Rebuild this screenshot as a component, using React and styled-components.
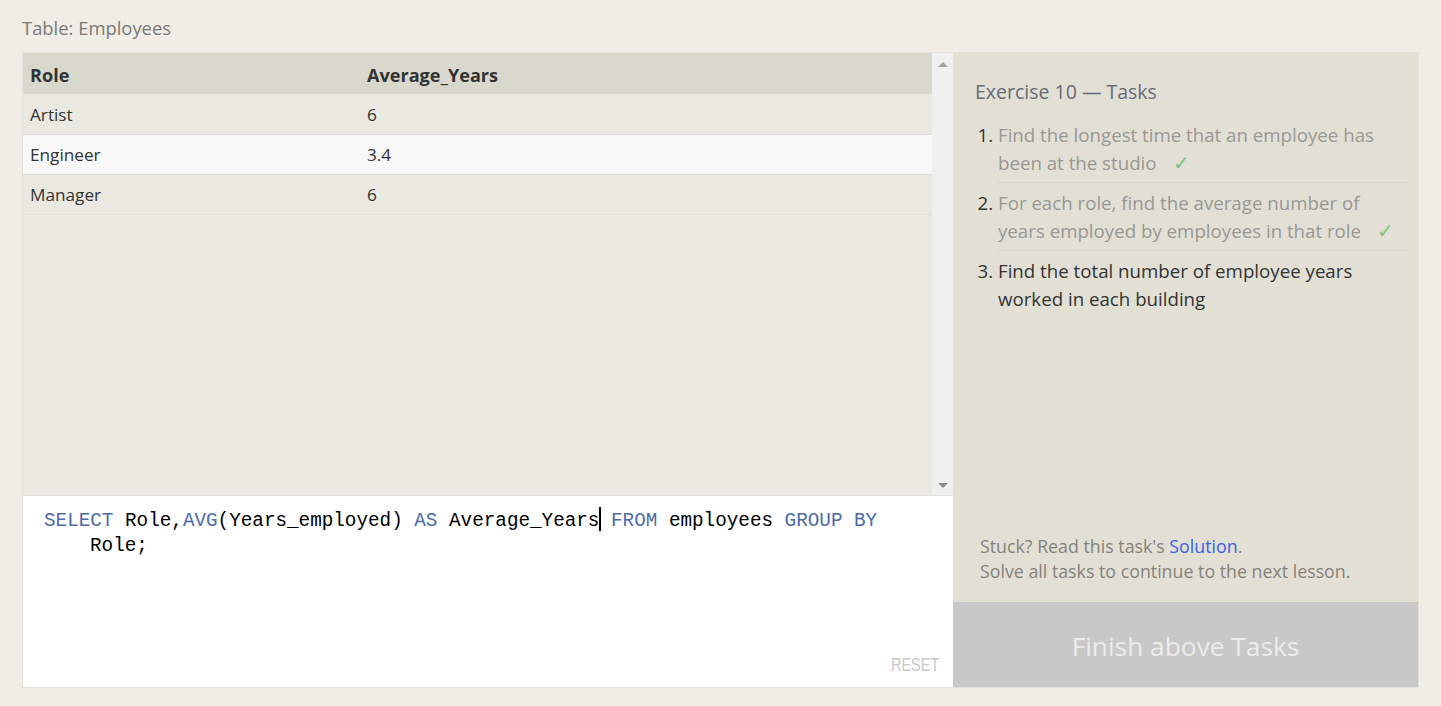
import React from "react";
import styled, { createGlobalStyle } from "styled-components";

const Global = createGlobalStyle`
  html, body { margin: 0; padding: 0; background: #efede6; }
  body { font-family: "Open Sans", "Noto Sans", sans-serif; }
  * { box-sizing: border-box; }
`;

const Page = styled.div`
  padding: 16px 22px 0 22px;
  width: 1441px;
  height: 706px;
`;

const Caption = styled.div`
  font-size: 18.4px;
  color: #7a7a76;
  line-height: 24px;
  height: 36px;
`;

const Panel = styled.div`
  display: flex;
  width: 1397px;
  height: 636px;
  border: 1px solid #e3e2da;
`;

const LeftCol = styled.div`
  width: 930px;
  display: flex;
  flex-direction: column;
`;

const TableArea = styled.div`
  height: 442px;
  display: flex;
  background: #eae9e1;
`;

const Table = styled.div`
  flex: 1;
  display: flex;
  flex-direction: column;
`;

const Row = styled.div`
  display: grid;
  grid-template-columns: 337px 1fr;
  height: ${(p) => (p.$head ? 42 : 40)}px;
  align-items: center;
  padding-top: ${(p) => (p.$head ? 2 : 0)}px;
  background: ${(p) => (p.$head ? "#d9d8cc" : p.$alt ? "#f8f8f8" : "#eae9e1")};
  border-bottom: ${(p) => (p.$head ? "1px solid #eae9e1" : "1px solid #dededa")};
  font-size: ${(p) => (p.$head ? 18.1 : 17.2)}px;
  font-weight: ${(p) => (p.$head ? 700 : 400)};
  color: #333;
`;

const Cell = styled.div`
  padding-left: 7px;
`;

const Scrollbar = styled.div`
  width: 21px;
  background: #f0f0f0;
  display: flex;
  flex-direction: column;
  justify-content: space-between;
  align-items: center;
  padding: 9px 0 7px;
`;

const Arrow = styled.div`
  width: 0;
  height: 0;
  border-left: 5px solid transparent;
  border-right: 5px solid transparent;
  ${(p) => (p.$down ? "border-top: 5px solid #8a8a8a;" : "border-bottom: 5px solid #a0a0a0;")}
`;

const Editor = styled.div`
  flex: 1;
  background: #fff;
  border-top: 1px solid #e2e2e2;
  position: relative;
  padding: 11px 21px;
  font-family: "Liberation Mono", "DejaVu Sans Mono", monospace;
  font-size: 19.3px;
  line-height: 25px;
  color: #000;
`;

const CodeLine = styled.div`
  white-space: pre;
  padding-left: ${(p) => (p.$indent ? 46 : 0)}px;
`;

const Kw = styled.span`
  color: #4c6ba8;
`;

const Caret = styled.span`
  display: inline-block;
  width: 2px;
  height: 24px;
  background: #000;
  vertical-align: -5px;
  margin-right: -2px;
`;

const Reset = styled.div`
  position: absolute;
  right: 14px;
  bottom: 9px;
  font-family: "Liberation Sans", "Arial", sans-serif;
  font-size: 17.5px;
  color: #c8c8c8;
  transform: scaleX(0.83);
  transform-origin: right;
`;

const RightCol = styled.div`
  flex: 1;
  display: flex;
  flex-direction: column;
  background: #e2e0d5;
`;

const Tasks = styled.div`
  flex: 1;
  padding: 26px 10px 0 22px;
  display: flex;
  flex-direction: column;
`;

const Title = styled.div`
  font-size: 19.5px;
  color: #676b77;
  line-height: 26px;
  margin-bottom: 16px;
`;

const TaskList = styled.ol`
  margin: 0;
  padding: 0 0 0 23px;
  font-size: 18.7px;
  line-height: 28px;
`;

const Task = styled.li`
  color: ${(p) => (p.$done ? "#999894" : "#333")};
  padding-bottom: 5px;
  margin-bottom: 6px;
  border-bottom: ${(p) => (p.$last ? "none" : "1px solid #d6d4c9")};
  &::marker {
    color: #333;
  }
`;

const Check = styled.span`
  color: #7ec77e;
  margin-left: 16px;
  font-size: 20px;
  font-family: "DejaVu Sans", sans-serif;
  font-weight: 300;
`;

const Help = styled.div`
  margin-top: auto;
  padding: 0 0 18px 5px;
  font-size: 17.8px;
  line-height: 25px;
  color: #86827a;
`;

const Link = styled.a`
  color: #3d5fe0;
  text-decoration: none;
`;

const FinishButton = styled.div`
  height: 85px;
  background: #c8c8c8;
  color: #ececec;
  font-size: 26.3px;
  display: flex;
  align-items: center;
  justify-content: center;
  padding-top: 2px;
`;

const rows = [
  ["Artist", "6"],
  ["Engineer", "3.4"],
  ["Manager", "6"],
];

export default function App() {
  return (
    <Page>
      <Global />
      <Caption>Table: Employees</Caption>
      <Panel>
        <LeftCol>
          <TableArea>
            <Table>
              <Row $head>
                <Cell>Role</Cell>
                <Cell>Average_Years</Cell>
              </Row>
              {rows.map((r, i) => (
                <Row key={r[0]} $alt={i % 2 === 1}>
                  <Cell>{r[0]}</Cell>
                  <Cell>{r[1]}</Cell>
                </Row>
              ))}
            </Table>
            <Scrollbar>
              <Arrow />
              <Arrow $down />
            </Scrollbar>
          </TableArea>
          <Editor>
            <CodeLine>
              <Kw>SELECT</Kw> Role,<Kw>AVG</Kw>(Years_employed) <Kw>AS</Kw> Average_Years<Caret /> <Kw>FROM</Kw> employees <Kw>GROUP</Kw> <Kw>BY</Kw>
            </CodeLine>
            <CodeLine $indent>Role;</CodeLine>
            <Reset>RESET</Reset>
          </Editor>
        </LeftCol>
        <RightCol>
          <Tasks>
            <Title>Exercise 10 — Tasks</Title>
            <TaskList>
              <Task $done>
                Find the longest time that an employee has been at the studio
                <Check>✓</Check>
              </Task>
              <Task $done>
                For each role, find the average number of years employed by employees in that role
                <Check>✓</Check>
              </Task>
              <Task $last>Find the total number of employee years worked in each building</Task>
            </TaskList>
            <Help>
              Stuck? Read this task's <Link href="#">Solution</Link>.
              <br />
              Solve all tasks to continue to the next lesson.
            </Help>
          </Tasks>
          <FinishButton>Finish above Tasks</FinishButton>
        </RightCol>
      </Panel>
    </Page>
  );
}
